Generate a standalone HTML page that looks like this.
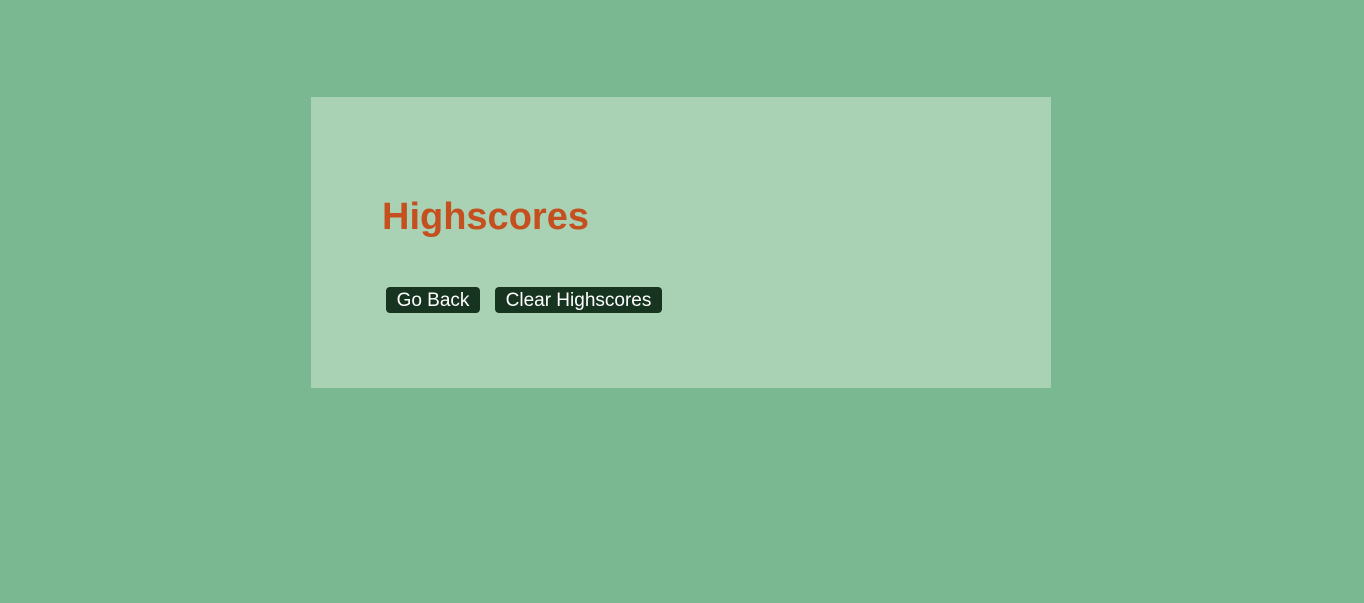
<!DOCTYPE html>
<html><head><style>
body{margin:0;background:#79b890;width:1364px;height:603px;font-family:"Liberation Sans",sans-serif;}
.panel{position:absolute;left:311px;top:97px;width:740px;height:291px;background:#a9d2b4;}
h1{position:absolute;left:71px;top:101px;margin:0;font-size:38px;line-height:38px;color:#c4501f;font-weight:bold;letter-spacing:0;}
.b{position:absolute;top:190px;height:26px;line-height:27px;background:#173420;color:#fff;font-size:19px;border-radius:4px;text-align:center;}
</style></head><body>
<div class="panel">
<h1>Highscores</h1>
<div class="b" style="left:75px;width:94px">Go Back</div>
<div class="b" style="left:184px;width:167px">Clear Highscores</div>
</div>
</body></html>
